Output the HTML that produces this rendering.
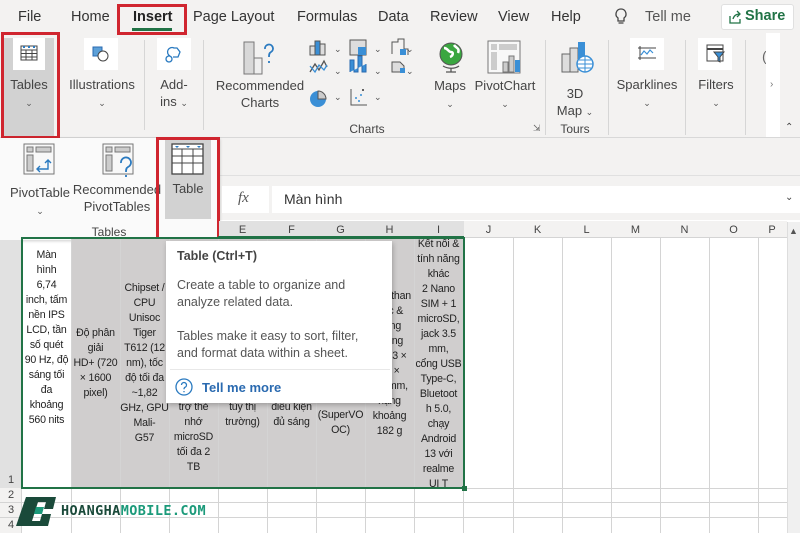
<!DOCTYPE html>
<html><head><meta charset="utf-8"><style>
*{margin:0;padding:0;box-sizing:border-box}
body{width:800px;height:533px;overflow:hidden;position:relative;background:#fff;font-family:"Liberation Sans","DejaVu Sans",sans-serif;color:#333}
.a{position:absolute}
.tab{position:absolute;top:9px;font-size:14.5px;color:#333}
.lbl{position:absolute;font-size:13px;color:#444;text-align:center;line-height:17px}
.chev{font-size:9px;color:#555}
.sep{position:absolute;width:1px;background:#d6d6d6}
.rb{position:absolute;border:3px solid #d0252f}
.cell{position:absolute;font-size:10.6px;letter-spacing:-0.2px;line-height:15px;text-align:center;color:#222;white-space:nowrap}
.vl{position:absolute;top:238px;width:1px;height:295px;background:#d4d4d4}
.hl{position:absolute;left:22px;height:1px;width:765px;background:#d4d4d4}
.ch{position:absolute;top:223px;height:15px;font-size:11px;color:#444;text-align:center;line-height:15px}
.rh{position:absolute;left:0;width:22px;font-size:11px;color:#444;text-align:center}
</style></head><body>
<div class="a" style="left:0;top:0;width:800px;height:220px;background:#f3f2f1"></div>
<div class="a" style="left:0;top:137px;width:800px;height:1px;background:#d8d8d8"></div>
<div class="a" style="left:218px;top:175px;width:582px;height:1px;background:#e0e0e0"></div>
<div class="tab" style="left:18px">File</div>
<div class="tab" style="left:71px">Home</div>
<div class="tab" style="left:133px;font-weight:bold;color:#222">Insert</div>
<div class="a" style="left:132px;top:28px;width:40px;height:3px;background:#217346"></div>
<div class="rb" style="left:117px;top:4px;width:70px;height:31px"></div>
<div class="tab" style="left:193px">Page Layout</div>
<div class="tab" style="left:297px">Formulas</div>
<div class="tab" style="left:378px">Data</div>
<div class="tab" style="left:430px">Review</div>
<div class="tab" style="left:498px">View</div>
<div class="tab" style="left:551px">Help</div>
<svg class="a" style="left:613px;top:7px" width="16" height="20"><path d="M8 2a5 5 0 0 0-3 9v3h6v-3a5 5 0 0 0-3-9zM5.5 16h5" fill="none" stroke="#444" stroke-width="1.3"/></svg>
<div class="tab" style="left:645px;color:#555">Tell me</div>
<div class="a" style="left:721px;top:4px;width:73px;height:26px;background:#fff;border:1px solid #e0e0e0;border-radius:3px"></div>
<svg class="a" style="left:728px;top:10px" width="14" height="14"><path d="M2 6v7h10V9M5 9c1-4 4-5 7-5M9 1l3 3-3 3" fill="none" stroke="#217346" stroke-width="1.3"/></svg>
<div class="tab" style="left:745px;top:8px;font-weight:bold;color:#217346">Share</div>

<div class="a" style="left:4px;top:38px;width:50px;height:98px;background:#d2d2d2"></div>
<div class="a" style="left:13px;top:38px;width:32px;height:32px;background:#fff"></div>
<svg class="a" style="left:20px;top:45px" width="18" height="16"><rect x="1" y="1" width="16" height="14" fill="#fff" stroke="#444"/><path d="M1 5h16M1 8.5h16M1 12h16M6 5v10M12 5v10" stroke="#444"/><path d="M3 2h2M8 2h2M13 2h2" stroke="#2a7ac0" stroke-width="2"/></svg>
<div class="lbl" style="left:4px;top:76px;width:50px">Tables<br><span class="chev">&#8964;</span></div>
<div class="rb" style="left:1px;top:32px;width:59px;height:107px"></div>
<div class="a" style="left:84px;top:38px;width:34px;height:32px;background:#fff"></div>
<svg class="a" style="left:91px;top:45px" width="20" height="18"><rect x="2" y="2" width="9" height="9" fill="#5ca0d8" stroke="#2a6ab0"/><circle cx="12" cy="11" r="5" fill="#fff" stroke="#444"/></svg>
<div class="lbl" style="left:66px;top:76px;width:72px">Illustrations<br><span class="chev">&#8964;</span></div>
<div class="sep" style="left:144px;top:40px;height:90px"></div>
<div class="a" style="left:157px;top:38px;width:34px;height:32px;background:#fff"></div>
<svg class="a" style="left:164px;top:44px" width="20" height="20"><path d="M6 12a4 4 0 0 1 4-8h3l3 4-2 5h-5" fill="none" stroke="#2a7ac0" stroke-width="1.3"/><circle cx="5" cy="15" r="3" fill="none" stroke="#2a7ac0" stroke-width="1.3"/></svg>
<div class="lbl" style="left:150px;top:76px;width:48px">Add-<br>ins <span class="chev">&#8964;</span></div>
<div class="sep" style="left:203px;top:40px;height:90px"></div>
<svg class="a" style="left:243px;top:40px" width="36" height="36"><rect x="1" y="2" width="10" height="32" fill="#d8d8d8" stroke="#777"/><rect x="11" y="18" width="8" height="16" fill="#eee" stroke="#777"/><path d="M22 9a4 4 0 1 1 6 3c-2 1-2 3-2 5M26 21v2" fill="none" stroke="#2a7ac0" stroke-width="1.8"/></svg>
<div class="lbl" style="left:212px;top:77px;width:96px">Recommended<br>Charts</div>
<svg class="a" style="left:308px;top:38px" width="62" height="75"><g stroke="#555" fill="#ddd"><rect x="2" y="8" width="5" height="9"/><rect x="7" y="3" width="5" height="14" fill="#3a8fd6"/><rect x="12" y="6" width="5" height="11"/></g><path d="M2 34l5-8 4 6 5-9 3 6" fill="none" stroke="#555" stroke-width="1.3"/><path d="M2 28l5 6 4-7 5 5 3-5" fill="none" stroke="#3a8fd6" stroke-width="1.3"/><circle cx="10" cy="61" r="8" fill="#3a8fd6"/><path d="M10 61V53a8 8 0 0 1 8 8z" fill="#ccc" stroke="#555"/><text x="26" y="14" font-size="9" fill="#555">&#8964;</text><text x="26" y="36" font-size="9" fill="#555">&#8964;</text><text x="26" y="62" font-size="9" fill="#555">&#8964;</text></svg>
<svg class="a" style="left:348px;top:38px" width="62" height="75"><rect x="2" y="2" width="16" height="15" fill="#ddd" stroke="#555"/><rect x="10" y="9" width="8" height="8" fill="#3a8fd6"/><path d="M2 34V22h4v12h4V18h4v16h4v-8" fill="#3a8fd6" stroke="#2a6ab0"/><path d="M3 51v16h16" fill="none" stroke="#555"/><g fill="#3a8fd6"><circle cx="8" cy="60" r="1"/><circle cx="13" cy="57" r="1"/><circle cx="11" cy="63" r="1"/><circle cx="15" cy="52" r="1" fill="#333"/></g><text x="26" y="14" font-size="9" fill="#555">&#8964;</text><text x="26" y="36" font-size="9" fill="#555">&#8964;</text><text x="26" y="62" font-size="9" fill="#555">&#8964;</text></svg>
<svg class="a" style="left:390px;top:38px" width="30" height="40"><path d="M2 16V4h6V1h6v10h4v6" fill="none" stroke="#555"/><rect x="10" y="11" width="6" height="6" fill="#3a8fd6"/><path d="M2 24h8l4 4v6H2z" fill="#ddd" stroke="#555"/><rect x="10" y="30" width="5" height="5" fill="#3a8fd6"/><text x="16" y="14" font-size="9" fill="#555">&#8964;</text><text x="16" y="36" font-size="9" fill="#555">&#8964;</text></svg>
<svg class="a" style="left:436px;top:40px" width="30" height="34"><circle cx="15" cy="14" r="11" fill="#3aa640" stroke="#555"/><path d="M8 8c4 0 4 4 7 4s2 4-1 5M18 5c2 3 6 3 4 8" fill="none" stroke="#fff" stroke-width="2.5"/><path d="M7 26c5 3 12 3 16 0M15 28v4M10 32h10" fill="none" stroke="#555" stroke-width="1.3"/></svg>
<div class="lbl" style="left:430px;top:77px;width:40px">Maps<br><span class="chev">&#8964;</span></div>
<svg class="a" style="left:487px;top:40px" width="34" height="34"><rect x="1" y="1" width="32" height="32" fill="#f8f8f8" stroke="#777"/><rect x="4" y="4" width="6" height="6" fill="#ccc"/><rect x="12" y="4" width="18" height="6" fill="#ccc"/><rect x="4" y="12" width="6" height="18" fill="#ccc"/><rect x="16" y="22" width="5" height="10" fill="#ccc" stroke="#777"/><rect x="22" y="16" width="5" height="16" fill="#ccc" stroke="#777"/><rect x="28" y="20" width="5" height="12" fill="#3a8fd6"/></svg>
<div class="lbl" style="left:470px;top:77px;width:70px">PivotChart<br><span class="chev">&#8964;</span></div>
<div class="lbl" style="left:342px;top:121px;width:50px;font-size:12px">Charts</div>
<div class="a" style="left:533px;top:123px;font-size:9px;color:#666">&#8690;</div>
<div class="sep" style="left:545px;top:40px;height:95px"></div>
<svg class="a" style="left:560px;top:40px" width="36" height="34"><rect x="2" y="14" width="8" height="18" fill="#ddd" stroke="#666"/><rect x="10" y="8" width="8" height="24" fill="#ddd" stroke="#666"/><rect x="18" y="2" width="7" height="20" fill="#3a8fd6"/><circle cx="25" cy="24" r="8" fill="#fff" stroke="#3a8fd6" stroke-width="1.5"/><path d="M17 24h16M25 16v16M19 20h12M19 28h12" stroke="#3a8fd6"/></svg>
<div class="lbl" style="left:550px;top:85px;width:50px">3D<br>Map <span class="chev">&#8964;</span></div>
<div class="lbl" style="left:550px;top:121px;width:50px;font-size:12px">Tours</div>
<div class="sep" style="left:608px;top:40px;height:95px"></div>
<div class="a" style="left:630px;top:38px;width:34px;height:32px;background:#fff"></div>
<svg class="a" style="left:637px;top:45px" width="20" height="16"><path d="M3 1v14M1 13h18M1 3h18" stroke="#444"/><path d="M4 10l3-4 3 3 3-4 3 3" fill="none" stroke="#3a8fd6" stroke-width="1.2"/></svg>
<div class="lbl" style="left:612px;top:76px;width:70px">Sparklines<br><span class="chev">&#8964;</span></div>
<div class="sep" style="left:685px;top:40px;height:95px"></div>
<div class="a" style="left:698px;top:38px;width:34px;height:32px;background:#fff"></div>
<svg class="a" style="left:706px;top:44px" width="20" height="20"><rect x="1" y="1" width="16" height="16" fill="#fff" stroke="#444"/><path d="M1 5h16" stroke="#444" stroke-width="2"/><path d="M8 8h10l-4 5v5l-2-1v-4z" fill="#3a8fd6" stroke="#444"/></svg>
<div class="lbl" style="left:690px;top:76px;width:52px">Filters<br><span class="chev">&#8964;</span></div>
<div class="sep" style="left:745px;top:40px;height:95px"></div>
<div class="a" style="left:762px;top:48px;font-size:14px;color:#666">(</div>
<div class="a" style="left:766px;top:33px;width:14px;height:104px;background:#fff"></div>
<div class="a" style="left:770px;top:79px;font-size:10px;color:#777">&#8250;</div>
<div class="a" style="left:785px;top:122px;font-size:10px;color:#444">&#8963;</div>

<div class="a" style="left:0;top:138px;width:219px;height:102px;background:#fafafa;box-shadow:1px 1px 3px rgba(0,0,0,.2)"></div>
<svg class="a" style="left:23px;top:143px" width="34" height="34"><rect x="1" y="1" width="30" height="30" fill="#f8f8f8" stroke="#777"/><rect x="4" y="4" width="6" height="5" fill="#ccc" stroke="#777"/><rect x="13" y="4" width="15" height="5" fill="#ccc" stroke="#777"/><rect x="4" y="12" width="6" height="16" fill="#ccc" stroke="#777"/><path d="M15 26h10v-9M22 20l3-3 3 3M17 23l-3 3 3 3" fill="none" stroke="#2a7ac0" stroke-width="1.4"/></svg>
<div class="lbl" style="left:5px;top:184px;width:70px">PivotTable<br><span class="chev">&#8964;</span></div>
<svg class="a" style="left:102px;top:143px" width="34" height="36"><rect x="1" y="1" width="30" height="30" fill="#f8f8f8" stroke="#777"/><rect x="4" y="4" width="6" height="5" fill="#ccc" stroke="#777"/><rect x="13" y="4" width="15" height="5" fill="#ccc" stroke="#777"/><rect x="4" y="12" width="6" height="16" fill="#ccc" stroke="#777"/><path d="M19 20a5 5 0 1 1 7 4c-2 1-2 3-2 5M24 32v2" fill="none" stroke="#2a7ac0" stroke-width="1.8"/></svg>
<div class="lbl" style="left:70px;top:181px;width:94px">Recommended<br>PivotTables</div>
<div class="lbl" style="left:82px;top:224px;width:54px;font-size:12px">Tables</div>
<div class="a" style="left:165px;top:138px;width:46px;height:81px;background:#d2d2d2"></div>
<svg class="a" style="left:171px;top:143px" width="34" height="33"><rect x="1" y="1" width="31" height="30" fill="#fff" stroke="#444" stroke-width="1.3"/><path d="M1 6h31M1 13h31M1 20h31M11 6v25M22 6v25" stroke="#444"/><path d="M4 3l2 2 2-2zM15 3l2 2 2-2zM26 3l2 2 2-2z" fill="#2a7ac0"/></svg>
<div class="lbl" style="left:165px;top:180px;width:46px">Table</div>
<div class="rb" style="left:156px;top:137px;width:64px;height:104px"></div>

<div class="a" style="left:222px;top:186px;width:47px;height:27px;background:#fff"></div>
<div class="a" style="left:238px;top:190px;font-family:'Liberation Serif',serif;font-style:italic;font-size:15px;color:#555">fx</div>
<div class="a" style="left:272px;top:186px;width:528px;height:27px;background:#fff"></div>
<div class="a" style="left:284px;top:191px;font-size:14px;color:#333">Màn hình</div>
<div class="a" style="left:785px;top:192px;font-size:10px;color:#444">&#8964;</div>

<div class="a" style="left:219px;top:221px;width:568px;height:17px;background:#f3f2f1;border-bottom:1px solid #d4d4d4"></div>
<div class="a" style="left:218px;top:236px;width:246px;height:2px;background:#217346"></div>
<div class="a" style="left:219px;top:221px;width:245px;height:15px;background:#e1e1e1"></div>
<div class="ch" style="left:218px;width:49px">E</div><div class="ch" style="left:267px;width:49px">F</div><div class="ch" style="left:316px;width:49px">G</div><div class="ch" style="left:365px;width:49px">H</div><div class="ch" style="left:414px;width:49px">I</div><div class="ch" style="left:464px;width:49px">J</div><div class="ch" style="left:513px;width:49px">K</div><div class="ch" style="left:562px;width:49px">L</div><div class="ch" style="left:611px;width:49px">M</div><div class="ch" style="left:660px;width:49px">N</div><div class="ch" style="left:709px;width:49px">O</div><div class="ch" style="left:758px;width:28px">P</div>
<div class="a" style="left:0;top:240px;width:22px;height:293px;background:#f3f2f1;border-right:1px solid #d4d4d4"></div>
<div class="a" style="left:0;top:240px;width:21px;height:248px;background:#e1e1e1"></div>
<div class="a" style="left:71px;top:238px;width:393px;height:250px;background:#d0cece"></div>
<div class="vl" style="left:71px"></div><div class="vl" style="left:120px"></div><div class="vl" style="left:169px"></div><div class="vl" style="left:218px"></div><div class="vl" style="left:267px"></div><div class="vl" style="left:316px"></div><div class="vl" style="left:365px"></div><div class="vl" style="left:414px"></div><div class="vl" style="left:463px"></div><div class="vl" style="left:513px"></div><div class="vl" style="left:562px"></div><div class="vl" style="left:611px"></div><div class="vl" style="left:660px"></div><div class="vl" style="left:709px"></div><div class="vl" style="left:758px"></div>
<div class="hl" style="top:502px"></div><div class="hl" style="top:517px"></div><div class="hl" style="top:488px"></div>
<div class="a" style="left:0;top:502px;width:22px;height:1px;background:#d4d4d4"></div><div class="a" style="left:0;top:517px;width:22px;height:1px;background:#d4d4d4"></div>
<div class="rh" style="top:474px">1</div><div class="rh" style="top:489px">2</div><div class="rh" style="top:504px">3</div><div class="rh" style="top:519px">4</div>
<div class="a" style="left:787px;top:222px;width:13px;height:311px;background:#f0f0f0;border-left:1px solid #ddd"></div>
<div class="a" style="left:789px;top:226px;font-size:9px;color:#555">&#9650;</div>

<div class="cell" style="left:22px;top:248px;width:49px">Màn<br>hình<br>6,74<br>inch, tấm<br>nền IPS<br>LCD, tần<br>số quét<br>90 Hz, độ<br>sáng tối<br>đa<br>khoảng<br>560 nits</div>
<div class="cell" style="left:71px;top:326px;width:49px">Độ phân<br>giải<br>HD+ (720<br>× 1600<br>pixel)</div>
<div class="cell" style="left:120px;top:281px;width:49px;overflow:hidden">Chipset /<br>CPU<br>Unisoc<br>Tiger<br>T612 (12<br>nm), tốc<br>độ tối đa<br>~1,82<br>GHz, GPU<br>Mali-<br>G57</div>
<div class="cell" style="left:169px;top:400px;width:49px">trợ thẻ<br>nhớ<br>microSD<br>tối đa 2<br>TB</div>
<div class="cell" style="left:218px;top:400px;width:49px">tùy thị<br>trường)</div>
<div class="cell" style="left:267px;top:400px;width:49px">điều kiện<br>đủ sáng</div>
<div class="cell" style="left:316px;top:408px;width:49px">(SuperVO<br>OC)</div>
<div class="cell" style="left:365px;top:289px;width:49px">Kích than<br>Sạc &amp;<br>trọng<br>lượng<br>165,3 ×<br>76 ×<br>8,2 mm,<br>nặng<br>khoảng<br>182 g</div>
<div class="cell" style="left:414px;top:237px;width:49px;height:251px;overflow:hidden">Kết nối &amp;<br>tính năng<br>khác<br>2 Nano<br>SIM + 1<br>microSD,<br>jack 3.5<br>mm,<br>cổng USB<br>Type-C,<br>Bluetoot<br>h 5.0,<br>chạy<br>Android<br>13 với<br>realme<br>UI T</div>
<div class="a" style="left:21px;top:237px;width:444px;height:252px;border:2px solid #217346"></div>
<div class="a" style="left:462px;top:486px;width:5px;height:5px;background:#217346"></div>

<div class="a" style="left:166px;top:241px;width:226px;height:162px;background:#fff;box-shadow:1px 2px 5px rgba(0,0,0,.25)"></div>
<div class="a" style="left:177px;top:249px;font-size:12.5px;font-weight:bold;color:#444">Table (Ctrl+T)</div>
<div class="a" style="left:177px;top:277px;font-size:12.5px;line-height:17px;color:#555">Create a table to organize and<br>analyze related data.<br><br>Tables make it easy to sort, filter,<br>and format data within a sheet.</div>
<div class="a" style="left:170px;top:369px;width:220px;height:1px;background:#e8e8e8"></div>
<svg class="a" style="left:175px;top:378px" width="18" height="18"><circle cx="9" cy="9" r="8" fill="none" stroke="#2a7ac0" stroke-width="1.3"/><path d="M6.5 7a2.5 2.5 0 1 1 3.5 2.3c-1 .5-1 1-1 2M9 13v1.3" fill="none" stroke="#2a7ac0" stroke-width="1.3"/></svg>
<div class="a" style="left:202px;top:380px;font-size:13px;font-weight:bold;color:#2a6ab0">Tell me more</div>

<svg class="a" style="left:16px;top:497px" width="42" height="29"><path d="M10 0h30l-3 12h-9l2-7h-8l-6 19h8l2-7h9l-3 12H0z" fill="#1a4a3a"/><path d="M20 10h8l-2 7h-8z" fill="#1b9a7a"/></svg>
<div class="a" style="left:61px;top:503px;font-family:'DejaVu Sans Mono','Liberation Mono',monospace;font-weight:bold;font-size:13.5px;letter-spacing:0.4px;color:#1a4a3a">HOANGHA<span style="color:#1b9a7a">MOBILE.COM</span></div>
</body></html>
